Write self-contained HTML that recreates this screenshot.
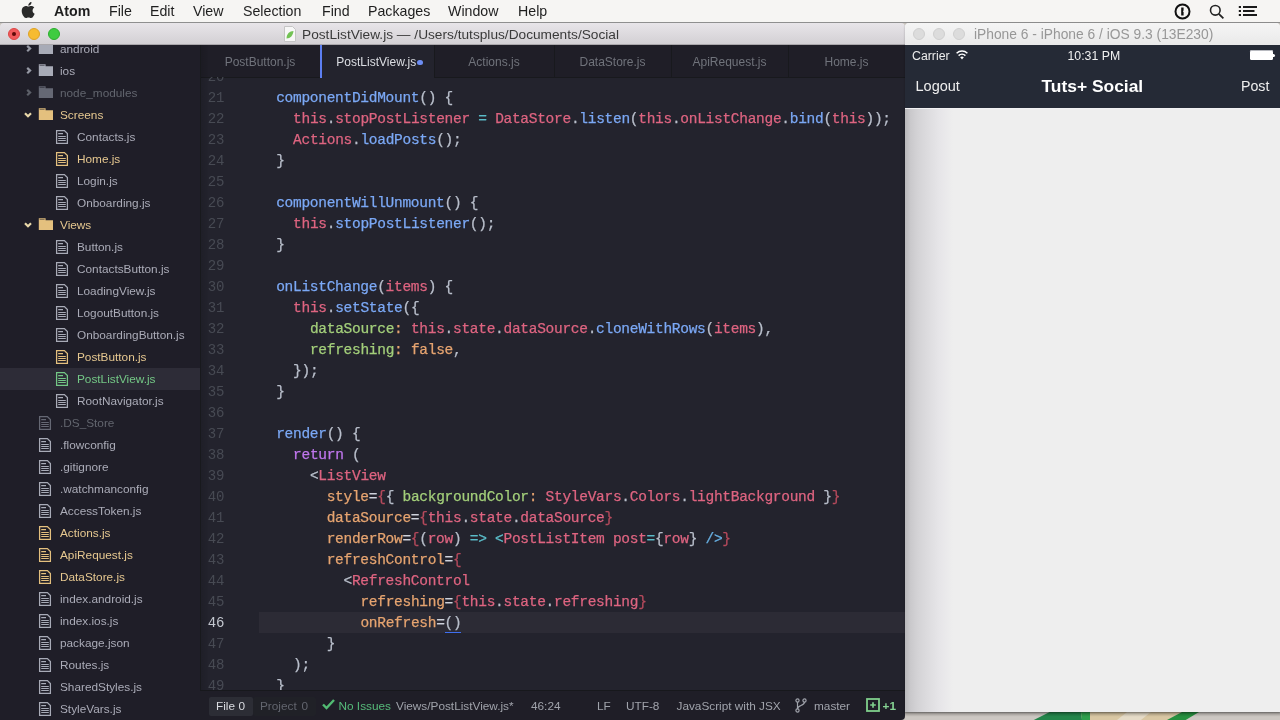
<!DOCTYPE html>
<html><head><meta charset="utf-8"><style>
*{margin:0;padding:0;box-sizing:border-box}
html,body{width:1280px;height:720px;overflow:hidden;background:#c8c3bc;font-family:"Liberation Sans",sans-serif}
.abs{position:absolute}
#menubar{left:0;top:0;width:1280px;height:22px;background:#f6f5f3;color:#1e1e1e;font-size:14.2px}
.mi{position:absolute;top:3px;line-height:17px;white-space:nowrap}
.tl{position:absolute;width:12px;height:12px;border-radius:50%}
.it{position:absolute;height:22px;line-height:22px;white-space:nowrap;font-size:11.8px}
.tab{position:absolute;top:45px;height:32px;line-height:35px;font-size:12px;color:#70737b;text-align:center;white-space:nowrap}
.tab.act{background:#23232d;color:#dcdee3;border-left:2px solid #5d7ff2;height:33px}
.dot{display:inline-block;width:5.5px;height:5.5px;border-radius:50%;background:#6d8df3;margin-left:1px;vertical-align:1px}
.ed{font-family:"Liberation Mono",monospace;font-size:14.5px;letter-spacing:-0.3px}
.ln{position:absolute;left:200px;width:24.5px;text-align:right;color:#474a53;height:21px;line-height:21px;font-family:"Liberation Mono",monospace;font-size:14px}
.ln.cur{color:#c3c7cf}
.cl{position:absolute;white-space:pre;height:21px;line-height:21px;font-family:"Liberation Mono",monospace;font-size:14.5px;letter-spacing:-0.285px;-webkit-text-stroke:0.25px currentColor}
.f{color:#7ba8f5} .r{color:#de6480} .c{color:#5bbcc8} .g{color:#b9bfcb} .gr{color:#a3cf7a} .o{color:#e6a470} .p{color:#c076ee} .lb{color:#67aee0} .dr{color:#b54a5c} .w{color:#cfd3dc}
.s{position:absolute;top:692px;height:29px;line-height:29px;white-space:nowrap;font-size:11.8px;color:#a0a3ab}
</style></head><body><div class="abs" style="left:0;top:0;width:1280px;height:720px;will-change:transform;overflow:hidden">
<!-- menubar -->
<div id="menubar" class="abs">
  <svg class="abs" style="left:21px;top:2px" width="14" height="16" viewBox="0 0 14 16"><path d="M11.6 8.5c0-2 1.6-2.9 1.7-3-0.9-1.4-2.4-1.6-2.9-1.6-1.2-0.1-2.4 0.7-3 0.7-0.6 0-1.6-0.7-2.6-0.7C3.4 4 2.1 4.8 1.4 6c-1.4 2.4-0.4 6 1 8 0.7 1 1.5 2 2.5 2 1 0 1.4-0.6 2.6-0.6s1.5 0.6 2.6 0.6c1.1 0 1.8-1 2.4-2 0.8-1.1 1.1-2.2 1.1-2.3-0.1 0-2.1-0.8-2.1-3.2zM9.7 2.6c0.5-0.7 0.9-1.6 0.8-2.6-0.8 0-1.8 0.5-2.3 1.2-0.5 0.6-1 1.5-0.8 2.5 0.9 0.1 1.8-0.5 2.3-1.1z" fill="#2a2a2a"/></svg>
  <span class="mi" style="left:54px;font-weight:bold">Atom</span>
  <span class="mi" style="left:109px">File</span>
  <span class="mi" style="left:150px">Edit</span>
  <span class="mi" style="left:193px">View</span>
  <span class="mi" style="left:243px">Selection</span>
  <span class="mi" style="left:322px">Find</span>
  <span class="mi" style="left:368px">Packages</span>
  <span class="mi" style="left:448px">Window</span>
  <span class="mi" style="left:518px">Help</span>
  <svg class="abs" style="left:1174px;top:3px" width="17" height="17" viewBox="0 0 17 17"><circle cx="8.5" cy="8.5" r="7" fill="none" stroke="#111" stroke-width="2"/><path d="M7.2 4.5h2.4v3l-0.8 0.8 0.8 0.8v3.4h-2.4z" fill="#111"/></svg>
  <svg class="abs" style="left:1209px;top:4px" width="16" height="16" viewBox="0 0 16 16"><circle cx="6.3" cy="6.3" r="4.8" fill="none" stroke="#222" stroke-width="1.6"/><path d="M9.8 9.8l4.6 4.6" stroke="#222" stroke-width="1.8"/></svg>
  <svg class="abs" style="left:1238px;top:5px" width="20" height="13" viewBox="0 0 20 13"><path d="M0.8 2h2.2M0.8 6h2.2M0.8 10h2.2M5 2h14M5 6h11.5M5 10h14" stroke="#1a1a1a" stroke-width="1.8"/></svg>
</div>
<div class="abs" style="left:0;top:22px;width:1280px;height:1px;background:#8f8f8f"></div>

<!-- atom window -->
<div class="abs" style="left:0;top:23px;width:905px;height:22px;background:linear-gradient(#e8e5e9,#d2cfd3);border-radius:4px 4px 0 0"></div>
<div class="abs" style="left:0;top:44px;width:905px;height:1px;background:#aaa7ab"></div>
<div class="tl" style="left:8px;top:28px;background:#f0595a;border:1px solid #dc4646"></div>
<div class="abs" style="left:12px;top:32px;width:4px;height:4px;border-radius:50%;background:#5e0a08"></div>
<div class="tl" style="left:28px;top:28px;background:#f6bb31;border:1px solid #dfa225"></div>
<div class="tl" style="left:48px;top:28px;background:#3fcb41;border:1px solid #2cae2d"></div>
<svg class="abs" style="left:284px;top:26px" width="12" height="16" viewBox="0 0 12 16"><path d="M0.5 0.5h8l3 3v12h-11z" fill="#f7f7f7" stroke="#c5c5c5"/><path d="M2.5 12.5c0-4.5 3-7.5 7-7.5-0.5 4.5-3 7.5-7 7.5z" fill="#72c254"/></svg>
<span class="abs" style="left:302px;top:26px;font-size:13.7px;color:#3a3a3a;line-height:17px;white-space:nowrap">PostListView.js — /Users/tutsplus/Documents/Social</span>

<div class="abs" style="left:0;top:45px;width:200px;height:675px;background:#1f1e28;overflow:hidden">
<div class="abs" style="left:0;top:-45px;width:200px;height:720px"><svg class="abs" style="left:26.4px;top:44.6px" width="9" height="9" viewBox="0 0 9 9"><path d="M1.2 0.9L4.1 3.6L1.2 6.3" fill="none" stroke="#9598a3" stroke-width="2.2"/></svg><svg class="abs" style="left:38px;top:41.8px" width="16" height="14" viewBox="0 0 16 14"><path d="M0.8 0.2H7.6V2.2H15V12.1H0.8Z" fill="#a8abb7"/><path d="M1.6 1.4H6.6" stroke="#1f1e28" stroke-width="0.9" opacity="0.6"/></svg><div class="it" style="left:60px;top:38px;color:#abacb8">android</div><svg class="abs" style="left:26.4px;top:66.6px" width="9" height="9" viewBox="0 0 9 9"><path d="M1.2 0.9L4.1 3.6L1.2 6.3" fill="none" stroke="#9598a3" stroke-width="2.2"/></svg><svg class="abs" style="left:38px;top:63.8px" width="16" height="14" viewBox="0 0 16 14"><path d="M0.8 0.2H7.6V2.2H15V12.1H0.8Z" fill="#a8abb7"/><path d="M1.6 1.4H6.6" stroke="#1f1e28" stroke-width="0.9" opacity="0.6"/></svg><div class="it" style="left:60px;top:60px;color:#abacb8">ios</div><svg class="abs" style="left:26.4px;top:88.6px" width="9" height="9" viewBox="0 0 9 9"><path d="M1.2 0.9L4.1 3.6L1.2 6.3" fill="none" stroke="#5c5f68" stroke-width="2.2"/></svg><svg class="abs" style="left:38px;top:85.8px" width="16" height="14" viewBox="0 0 16 14"><path d="M0.8 0.2H7.6V2.2H15V12.1H0.8Z" fill="#656874"/><path d="M1.6 1.4H6.6" stroke="#1f1e28" stroke-width="0.9" opacity="0.6"/></svg><div class="it" style="left:60px;top:82px;color:#62656e">node_modules</div><svg class="abs" style="left:24.2px;top:111.8px" width="9" height="9" viewBox="0 0 9 9"><path d="M1 1.2L4 4.2L7 1.2" fill="none" stroke="#ead9aa" stroke-width="2.2"/></svg><svg class="abs" style="left:38px;top:107.8px" width="16" height="14" viewBox="0 0 16 14"><path d="M0.8 0.2H7.6V2.2H15V12.1H0.8Z" fill="#e4c07e"/><path d="M1.6 1.4H6.6" stroke="#1f1e28" stroke-width="0.9" opacity="0.6"/></svg><div class="it" style="left:60px;top:104px;color:#e6c890">Screens</div><svg class="abs" style="left:55px;top:129px" width="14" height="16" viewBox="0 0 14 16"><path d="M1.6 1.6H9.4L12.4 4.6V14.4H1.6Z" fill="none" stroke="#a8abb7" stroke-width="1.25"/><path d="M3.2 4.6H8M3.2 7.5H10.8M3.2 9.5H10.8M3.2 11.5H10.8" stroke="#a8abb7" stroke-width="1.05"/></svg><div class="it" style="left:77px;top:126px;color:#abacb8">Contacts.js</div><svg class="abs" style="left:55px;top:151px" width="14" height="16" viewBox="0 0 14 16"><path d="M1.6 1.6H9.4L12.4 4.6V14.4H1.6Z" fill="none" stroke="#e4c07e" stroke-width="1.25"/><path d="M3.2 4.6H8M3.2 7.5H10.8M3.2 9.5H10.8M3.2 11.5H10.8" stroke="#e4c07e" stroke-width="1.05"/></svg><div class="it" style="left:77px;top:148px;color:#e6c890">Home.js</div><svg class="abs" style="left:55px;top:173px" width="14" height="16" viewBox="0 0 14 16"><path d="M1.6 1.6H9.4L12.4 4.6V14.4H1.6Z" fill="none" stroke="#a8abb7" stroke-width="1.25"/><path d="M3.2 4.6H8M3.2 7.5H10.8M3.2 9.5H10.8M3.2 11.5H10.8" stroke="#a8abb7" stroke-width="1.05"/></svg><div class="it" style="left:77px;top:170px;color:#abacb8">Login.js</div><svg class="abs" style="left:55px;top:195px" width="14" height="16" viewBox="0 0 14 16"><path d="M1.6 1.6H9.4L12.4 4.6V14.4H1.6Z" fill="none" stroke="#a8abb7" stroke-width="1.25"/><path d="M3.2 4.6H8M3.2 7.5H10.8M3.2 9.5H10.8M3.2 11.5H10.8" stroke="#a8abb7" stroke-width="1.05"/></svg><div class="it" style="left:77px;top:192px;color:#abacb8">Onboarding.js</div><svg class="abs" style="left:24.2px;top:221.8px" width="9" height="9" viewBox="0 0 9 9"><path d="M1 1.2L4 4.2L7 1.2" fill="none" stroke="#ead9aa" stroke-width="2.2"/></svg><svg class="abs" style="left:38px;top:217.8px" width="16" height="14" viewBox="0 0 16 14"><path d="M0.8 0.2H7.6V2.2H15V12.1H0.8Z" fill="#e4c07e"/><path d="M1.6 1.4H6.6" stroke="#1f1e28" stroke-width="0.9" opacity="0.6"/></svg><div class="it" style="left:60px;top:214px;color:#e6c890">Views</div><svg class="abs" style="left:55px;top:239px" width="14" height="16" viewBox="0 0 14 16"><path d="M1.6 1.6H9.4L12.4 4.6V14.4H1.6Z" fill="none" stroke="#a8abb7" stroke-width="1.25"/><path d="M3.2 4.6H8M3.2 7.5H10.8M3.2 9.5H10.8M3.2 11.5H10.8" stroke="#a8abb7" stroke-width="1.05"/></svg><div class="it" style="left:77px;top:236px;color:#abacb8">Button.js</div><svg class="abs" style="left:55px;top:261px" width="14" height="16" viewBox="0 0 14 16"><path d="M1.6 1.6H9.4L12.4 4.6V14.4H1.6Z" fill="none" stroke="#a8abb7" stroke-width="1.25"/><path d="M3.2 4.6H8M3.2 7.5H10.8M3.2 9.5H10.8M3.2 11.5H10.8" stroke="#a8abb7" stroke-width="1.05"/></svg><div class="it" style="left:77px;top:258px;color:#abacb8">ContactsButton.js</div><svg class="abs" style="left:55px;top:283px" width="14" height="16" viewBox="0 0 14 16"><path d="M1.6 1.6H9.4L12.4 4.6V14.4H1.6Z" fill="none" stroke="#a8abb7" stroke-width="1.25"/><path d="M3.2 4.6H8M3.2 7.5H10.8M3.2 9.5H10.8M3.2 11.5H10.8" stroke="#a8abb7" stroke-width="1.05"/></svg><div class="it" style="left:77px;top:280px;color:#abacb8">LoadingView.js</div><svg class="abs" style="left:55px;top:305px" width="14" height="16" viewBox="0 0 14 16"><path d="M1.6 1.6H9.4L12.4 4.6V14.4H1.6Z" fill="none" stroke="#a8abb7" stroke-width="1.25"/><path d="M3.2 4.6H8M3.2 7.5H10.8M3.2 9.5H10.8M3.2 11.5H10.8" stroke="#a8abb7" stroke-width="1.05"/></svg><div class="it" style="left:77px;top:302px;color:#abacb8">LogoutButton.js</div><svg class="abs" style="left:55px;top:327px" width="14" height="16" viewBox="0 0 14 16"><path d="M1.6 1.6H9.4L12.4 4.6V14.4H1.6Z" fill="none" stroke="#a8abb7" stroke-width="1.25"/><path d="M3.2 4.6H8M3.2 7.5H10.8M3.2 9.5H10.8M3.2 11.5H10.8" stroke="#a8abb7" stroke-width="1.05"/></svg><div class="it" style="left:77px;top:324px;color:#abacb8">OnboardingButton.js</div><svg class="abs" style="left:55px;top:349px" width="14" height="16" viewBox="0 0 14 16"><path d="M1.6 1.6H9.4L12.4 4.6V14.4H1.6Z" fill="none" stroke="#e4c07e" stroke-width="1.25"/><path d="M3.2 4.6H8M3.2 7.5H10.8M3.2 9.5H10.8M3.2 11.5H10.8" stroke="#e4c07e" stroke-width="1.05"/></svg><div class="it" style="left:77px;top:346px;color:#e6c890">PostButton.js</div><div class="abs" style="left:0;top:368px;width:200px;height:22px;background:#2d2c37"></div><svg class="abs" style="left:55px;top:371px" width="14" height="16" viewBox="0 0 14 16"><path d="M1.6 1.6H9.4L12.4 4.6V14.4H1.6Z" fill="none" stroke="#74c886" stroke-width="1.25"/><path d="M3.2 4.6H8M3.2 7.5H10.8M3.2 9.5H10.8M3.2 11.5H10.8" stroke="#74c886" stroke-width="1.05"/></svg><div class="it" style="left:77px;top:368px;color:#74c886">PostListView.js</div><svg class="abs" style="left:55px;top:393px" width="14" height="16" viewBox="0 0 14 16"><path d="M1.6 1.6H9.4L12.4 4.6V14.4H1.6Z" fill="none" stroke="#a8abb7" stroke-width="1.25"/><path d="M3.2 4.6H8M3.2 7.5H10.8M3.2 9.5H10.8M3.2 11.5H10.8" stroke="#a8abb7" stroke-width="1.05"/></svg><div class="it" style="left:77px;top:390px;color:#abacb8">RootNavigator.js</div><svg class="abs" style="left:38px;top:415px" width="14" height="16" viewBox="0 0 14 16"><path d="M1.6 1.6H9.4L12.4 4.6V14.4H1.6Z" fill="none" stroke="#656874" stroke-width="1.25"/><path d="M3.2 4.6H8M3.2 7.5H10.8M3.2 9.5H10.8M3.2 11.5H10.8" stroke="#656874" stroke-width="1.05"/></svg><div class="it" style="left:60px;top:412px;color:#62656e">.DS_Store</div><svg class="abs" style="left:38px;top:437px" width="14" height="16" viewBox="0 0 14 16"><path d="M1.6 1.6H9.4L12.4 4.6V14.4H1.6Z" fill="none" stroke="#a8abb7" stroke-width="1.25"/><path d="M3.2 4.6H8M3.2 7.5H10.8M3.2 9.5H10.8M3.2 11.5H10.8" stroke="#a8abb7" stroke-width="1.05"/></svg><div class="it" style="left:60px;top:434px;color:#abacb8">.flowconfig</div><svg class="abs" style="left:38px;top:459px" width="14" height="16" viewBox="0 0 14 16"><path d="M1.6 1.6H9.4L12.4 4.6V14.4H1.6Z" fill="none" stroke="#a8abb7" stroke-width="1.25"/><path d="M3.2 4.6H8M3.2 7.5H10.8M3.2 9.5H10.8M3.2 11.5H10.8" stroke="#a8abb7" stroke-width="1.05"/></svg><div class="it" style="left:60px;top:456px;color:#abacb8">.gitignore</div><svg class="abs" style="left:38px;top:481px" width="14" height="16" viewBox="0 0 14 16"><path d="M1.6 1.6H9.4L12.4 4.6V14.4H1.6Z" fill="none" stroke="#a8abb7" stroke-width="1.25"/><path d="M3.2 4.6H8M3.2 7.5H10.8M3.2 9.5H10.8M3.2 11.5H10.8" stroke="#a8abb7" stroke-width="1.05"/></svg><div class="it" style="left:60px;top:478px;color:#abacb8">.watchmanconfig</div><svg class="abs" style="left:38px;top:503px" width="14" height="16" viewBox="0 0 14 16"><path d="M1.6 1.6H9.4L12.4 4.6V14.4H1.6Z" fill="none" stroke="#a8abb7" stroke-width="1.25"/><path d="M3.2 4.6H8M3.2 7.5H10.8M3.2 9.5H10.8M3.2 11.5H10.8" stroke="#a8abb7" stroke-width="1.05"/></svg><div class="it" style="left:60px;top:500px;color:#abacb8">AccessToken.js</div><svg class="abs" style="left:38px;top:525px" width="14" height="16" viewBox="0 0 14 16"><path d="M1.6 1.6H9.4L12.4 4.6V14.4H1.6Z" fill="none" stroke="#e4c07e" stroke-width="1.25"/><path d="M3.2 4.6H8M3.2 7.5H10.8M3.2 9.5H10.8M3.2 11.5H10.8" stroke="#e4c07e" stroke-width="1.05"/></svg><div class="it" style="left:60px;top:522px;color:#e6c890">Actions.js</div><svg class="abs" style="left:38px;top:547px" width="14" height="16" viewBox="0 0 14 16"><path d="M1.6 1.6H9.4L12.4 4.6V14.4H1.6Z" fill="none" stroke="#e4c07e" stroke-width="1.25"/><path d="M3.2 4.6H8M3.2 7.5H10.8M3.2 9.5H10.8M3.2 11.5H10.8" stroke="#e4c07e" stroke-width="1.05"/></svg><div class="it" style="left:60px;top:544px;color:#e6c890">ApiRequest.js</div><svg class="abs" style="left:38px;top:569px" width="14" height="16" viewBox="0 0 14 16"><path d="M1.6 1.6H9.4L12.4 4.6V14.4H1.6Z" fill="none" stroke="#e4c07e" stroke-width="1.25"/><path d="M3.2 4.6H8M3.2 7.5H10.8M3.2 9.5H10.8M3.2 11.5H10.8" stroke="#e4c07e" stroke-width="1.05"/></svg><div class="it" style="left:60px;top:566px;color:#e6c890">DataStore.js</div><svg class="abs" style="left:38px;top:591px" width="14" height="16" viewBox="0 0 14 16"><path d="M1.6 1.6H9.4L12.4 4.6V14.4H1.6Z" fill="none" stroke="#a8abb7" stroke-width="1.25"/><path d="M3.2 4.6H8M3.2 7.5H10.8M3.2 9.5H10.8M3.2 11.5H10.8" stroke="#a8abb7" stroke-width="1.05"/></svg><div class="it" style="left:60px;top:588px;color:#abacb8">index.android.js</div><svg class="abs" style="left:38px;top:613px" width="14" height="16" viewBox="0 0 14 16"><path d="M1.6 1.6H9.4L12.4 4.6V14.4H1.6Z" fill="none" stroke="#a8abb7" stroke-width="1.25"/><path d="M3.2 4.6H8M3.2 7.5H10.8M3.2 9.5H10.8M3.2 11.5H10.8" stroke="#a8abb7" stroke-width="1.05"/></svg><div class="it" style="left:60px;top:610px;color:#abacb8">index.ios.js</div><svg class="abs" style="left:38px;top:635px" width="14" height="16" viewBox="0 0 14 16"><path d="M1.6 1.6H9.4L12.4 4.6V14.4H1.6Z" fill="none" stroke="#a8abb7" stroke-width="1.25"/><path d="M3.2 4.6H8M3.2 7.5H10.8M3.2 9.5H10.8M3.2 11.5H10.8" stroke="#a8abb7" stroke-width="1.05"/></svg><div class="it" style="left:60px;top:632px;color:#abacb8">package.json</div><svg class="abs" style="left:38px;top:657px" width="14" height="16" viewBox="0 0 14 16"><path d="M1.6 1.6H9.4L12.4 4.6V14.4H1.6Z" fill="none" stroke="#a8abb7" stroke-width="1.25"/><path d="M3.2 4.6H8M3.2 7.5H10.8M3.2 9.5H10.8M3.2 11.5H10.8" stroke="#a8abb7" stroke-width="1.05"/></svg><div class="it" style="left:60px;top:654px;color:#abacb8">Routes.js</div><svg class="abs" style="left:38px;top:679px" width="14" height="16" viewBox="0 0 14 16"><path d="M1.6 1.6H9.4L12.4 4.6V14.4H1.6Z" fill="none" stroke="#a8abb7" stroke-width="1.25"/><path d="M3.2 4.6H8M3.2 7.5H10.8M3.2 9.5H10.8M3.2 11.5H10.8" stroke="#a8abb7" stroke-width="1.05"/></svg><div class="it" style="left:60px;top:676px;color:#abacb8">SharedStyles.js</div><svg class="abs" style="left:38px;top:701px" width="14" height="16" viewBox="0 0 14 16"><path d="M1.6 1.6H9.4L12.4 4.6V14.4H1.6Z" fill="none" stroke="#a8abb7" stroke-width="1.25"/><path d="M3.2 4.6H8M3.2 7.5H10.8M3.2 9.5H10.8M3.2 11.5H10.8" stroke="#a8abb7" stroke-width="1.05"/></svg><div class="it" style="left:60px;top:698px;color:#abacb8">StyleVars.js</div></div>
</div>
<div class="abs" style="left:200px;top:45px;width:705px;height:645px;background:#23232d"></div>
<div class="abs" style="left:200px;top:45px;width:705px;height:32px;background:#1f1e27"></div>
<div class="abs" style="left:200px;top:77px;width:705px;height:1px;background:#18191d"></div>
<div class="abs" style="left:200px;top:45px;width:1px;height:645px;background:#18191d"></div>
<div class="abs" style="left:201px;top:45px;width:7px;height:645px;background:linear-gradient(90deg,rgba(0,0,0,0.12),rgba(0,0,0,0.03))"></div>
<div class="tab" style="left:200px;width:120px">PostButton.js</div><div class="tab act" style="left:320px;width:114px"><span style="margin-left:3px">PostListView.js</span><span class="dot"></span></div><div class="tab" style="left:434px;width:120px">Actions.js</div><div class="abs" style="left:434px;top:45px;width:1px;height:32px;background:#18191d"></div><div class="tab" style="left:554px;width:117px">DataStore.js</div><div class="abs" style="left:554px;top:45px;width:1px;height:32px;background:#18191d"></div><div class="tab" style="left:671px;width:117px">ApiRequest.js</div><div class="abs" style="left:671px;top:45px;width:1px;height:32px;background:#18191d"></div><div class="tab" style="left:788px;width:117px">Home.js</div><div class="abs" style="left:788px;top:45px;width:1px;height:32px;background:#18191d"></div>
<div class="abs" style="left:259px;top:612px;width:646px;height:21px;background:#2c2b35"></div>
<div class="abs" style="left:200px;top:77px;width:705px;height:613px;overflow:hidden">
<div class="abs" style="left:-200px;top:-77px;width:905px;height:720px"><div class="ln" style="top:67px">20</div><div class="cl" style="top:67px;left:276.2px"><span class="g"></span></div><div class="ln" style="top:88px">21</div><div class="cl" style="top:88px;left:276.2px"><span class="f">componentDidMount</span><span class="g">() {</span></div><div class="ln" style="top:109px">22</div><div class="cl" style="top:109px;left:293.1px"><span class="r">this</span><span class="g">.</span><span class="r">stopPostListener</span><span class="g"> </span><span class="c">=</span><span class="g"> </span><span class="r">DataStore</span><span class="g">.</span><span class="f">listen</span><span class="g">(</span><span class="r">this</span><span class="g">.</span><span class="r">onListChange</span><span class="g">.</span><span class="f">bind</span><span class="g">(</span><span class="r">this</span><span class="g">));</span></div><div class="ln" style="top:130px">23</div><div class="cl" style="top:130px;left:293.1px"><span class="r">Actions</span><span class="g">.</span><span class="f">loadPosts</span><span class="g">();</span></div><div class="ln" style="top:151px">24</div><div class="cl" style="top:151px;left:276.2px"><span class="g">}</span></div><div class="ln" style="top:172px">25</div><div class="ln" style="top:193px">26</div><div class="cl" style="top:193px;left:276.2px"><span class="f">componentWillUnmount</span><span class="g">() {</span></div><div class="ln" style="top:214px">27</div><div class="cl" style="top:214px;left:293.1px"><span class="r">this</span><span class="g">.</span><span class="f">stopPostListener</span><span class="g">();</span></div><div class="ln" style="top:235px">28</div><div class="cl" style="top:235px;left:276.2px"><span class="g">}</span></div><div class="ln" style="top:256px">29</div><div class="ln" style="top:277px">30</div><div class="cl" style="top:277px;left:276.2px"><span class="f">onListChange</span><span class="g">(</span><span class="r">items</span><span class="g">) {</span></div><div class="ln" style="top:298px">31</div><div class="cl" style="top:298px;left:293.1px"><span class="r">this</span><span class="g">.</span><span class="f">setState</span><span class="g">({</span></div><div class="ln" style="top:319px">32</div><div class="cl" style="top:319px;left:309.9px"><span class="gr">dataSource</span><span class="o">:</span><span class="g"> </span><span class="r">this</span><span class="g">.</span><span class="r">state</span><span class="g">.</span><span class="r">dataSource</span><span class="g">.</span><span class="f">cloneWithRows</span><span class="g">(</span><span class="r">items</span><span class="g">),</span></div><div class="ln" style="top:340px">33</div><div class="cl" style="top:340px;left:309.9px"><span class="gr">refreshing</span><span class="o">:</span><span class="g"> </span><span class="o">false</span><span class="g">,</span></div><div class="ln" style="top:361px">34</div><div class="cl" style="top:361px;left:293.1px"><span class="g">});</span></div><div class="ln" style="top:382px">35</div><div class="cl" style="top:382px;left:276.2px"><span class="g">}</span></div><div class="ln" style="top:403px">36</div><div class="ln" style="top:424px">37</div><div class="cl" style="top:424px;left:276.2px"><span class="f">render</span><span class="g">() {</span></div><div class="ln" style="top:445px">38</div><div class="cl" style="top:445px;left:293.1px"><span class="p">return</span><span class="g"> (</span></div><div class="ln" style="top:466px">39</div><div class="cl" style="top:466px;left:309.9px"><span class="g">&lt;</span><span class="r">ListView</span></div><div class="ln" style="top:487px">40</div><div class="cl" style="top:487px;left:326.7px"><span class="o">style</span><span class="w">=</span><span class="dr">{</span><span class="g">{ </span><span class="gr">backgroundColor</span><span class="o">:</span><span class="g"> </span><span class="r">StyleVars</span><span class="g">.</span><span class="r">Colors</span><span class="g">.</span><span class="r">lightBackground</span><span class="g"> }</span><span class="dr">}</span></div><div class="ln" style="top:508px">41</div><div class="cl" style="top:508px;left:326.7px"><span class="o">dataSource</span><span class="w">=</span><span class="dr">{</span><span class="r">this</span><span class="g">.</span><span class="r">state</span><span class="g">.</span><span class="r">dataSource</span><span class="dr">}</span></div><div class="ln" style="top:529px">42</div><div class="cl" style="top:529px;left:326.7px"><span class="o">renderRow</span><span class="w">=</span><span class="dr">{</span><span class="g">(</span><span class="r">row</span><span class="g">) </span><span class="c">=&gt;</span><span class="g"> </span><span class="c">&lt;</span><span class="r">PostListItem</span><span class="g"> </span><span class="r">post</span><span class="c">=</span><span class="g">{</span><span class="r">row</span><span class="g">} </span><span class="lb">/&gt;</span><span class="dr">}</span></div><div class="ln" style="top:550px">43</div><div class="cl" style="top:550px;left:326.7px"><span class="o">refreshControl</span><span class="w">=</span><span class="dr">{</span></div><div class="ln" style="top:571px">44</div><div class="cl" style="top:571px;left:343.5px"><span class="g">&lt;</span><span class="r">RefreshControl</span></div><div class="ln" style="top:592px">45</div><div class="cl" style="top:592px;left:360.4px"><span class="o">refreshing</span><span class="w">=</span><span class="dr">{</span><span class="r">this</span><span class="g">.</span><span class="r">state</span><span class="g">.</span><span class="r">refreshing</span><span class="dr">}</span></div><div class="ln cur" style="top:613px">46</div><div class="cl" style="top:613px;left:360.4px"><span class="o">onRefresh</span><span class="w">=</span><span class="g">()</span></div><div class="ln" style="top:634px">47</div><div class="cl" style="top:634px;left:326.7px"><span class="g">}</span></div><div class="ln" style="top:655px">48</div><div class="cl" style="top:655px;left:293.1px"><span class="g">);</span></div><div class="ln" style="top:676px">49</div><div class="cl" style="top:676px;left:276.2px"><span class="g">}</span></div>
<div class="abs" style="left:444.5px;top:632px;width:16px;height:1px;background:#3f6ff0"></div>
</div></div>

<!-- status bar -->
<div class="abs" style="left:200px;top:690px;width:705px;height:30px;background:#1f1e27;border-radius:0 0 4px 0"></div>
<div class="abs" style="left:200px;top:690px;width:705px;height:1px;background:#17181c"></div>
<div class="abs" style="left:209px;top:697px;width:44px;height:19px;background:#2c2d35;border-radius:2px"></div>
<div class="abs" style="left:253px;top:697px;width:63px;height:19px;background:#202127;border-radius:2px"></div>
<span class="s" style="left:216px;color:#dadce1">File</span><span class="s" style="left:238.5px;color:#dadce1">0</span>
<span class="s" style="left:260px;color:#62656e">Project</span><span class="s" style="left:301.5px;color:#62656e">0</span>
<svg class="abs" style="left:322px;top:699px" width="13" height="11" viewBox="0 0 13 11"><path d="M1 5.5l3.5 3.5 7.5-8" fill="none" stroke="#52bb73" stroke-width="2.4"/></svg>
<span class="s" style="left:338.5px;color:#56bb7a">No Issues</span>
<span class="s" style="left:396px">Views/PostListView.js*</span>
<span class="s" style="left:531px">46:24</span>
<span class="s" style="left:597px">LF</span>
<span class="s" style="left:626px">UTF-8</span>
<span class="s" style="left:676.5px">JavaScript with JSX</span>
<svg class="abs" style="left:795px;top:698px" width="12" height="15" viewBox="0 0 12 15"><circle cx="2.5" cy="2.5" r="1.6" fill="none" stroke="#a0a3ab" stroke-width="1.2"/><circle cx="2.5" cy="12.5" r="1.6" fill="none" stroke="#a0a3ab" stroke-width="1.2"/><circle cx="9.5" cy="2.5" r="1.6" fill="none" stroke="#a0a3ab" stroke-width="1.2"/><path d="M2.5 4v7M9.5 4c0 4-7 3-7 7" fill="none" stroke="#a0a3ab" stroke-width="1.2"/></svg>
<span class="s" style="left:814px">master</span>
<svg class="abs" style="left:866px;top:698px" width="14" height="14" viewBox="0 0 14 14"><rect x="1" y="1" width="12" height="12" fill="none" stroke="#7fcf8c" stroke-width="1.8"/><path d="M7 4.2v5.6M4.2 7h5.6" stroke="#7fcf8c" stroke-width="1.7"/></svg>
<span class="s" style="left:882.5px;color:#86d393;font-weight:bold">+1</span>

<!-- wallpaper strip -->
<svg class="abs" style="left:905px;top:712px" width="375" height="8" viewBox="0 0 375 8">
<defs><linearGradient id="sh" x1="0" y1="0" x2="0" y2="1"><stop offset="0" stop-color="#000" stop-opacity="0.28"/><stop offset="0.6" stop-color="#000" stop-opacity="0"/></linearGradient></defs>
<rect width="375" height="8" fill="#ccc7c2"/>
<polygon points="177,0 277,0 262,8 165,8" fill="#d9c7a3"/>
<polygon points="222,0 246,0 236,8 212,8" fill="#e5dbc7"/>
<polygon points="144.7,0 176,0 177,8 128.8,8" fill="#23854a"/>
<polygon points="176,0 185,0 185,8 177,8" fill="#2e9f4c"/>
<polygon points="277,0 294,0 280.7,8 262,8" fill="#26913f"/>
<rect width="375" height="8" fill="url(#sh)"/>
</svg>

<!-- simulator -->
<div class="abs" style="left:905px;top:23px;width:375px;height:689px;background:#eeeeee;border-radius:4px 4px 0 0;overflow:hidden;box-shadow:0 1px 2px rgba(0,0,0,0.3)">
  <div class="abs" style="left:0;top:0;width:375px;height:22px;background:linear-gradient(#f5f5f5,#e9e9e9)"></div>
  <div class="tl" style="left:8px;top:5px;background:#dcdcdc;border:1px solid #cfcfcf"></div>
  <div class="tl" style="left:28px;top:5px;background:#dcdcdc;border:1px solid #cfcfcf"></div>
  <div class="tl" style="left:48px;top:5px;background:#dcdcdc;border:1px solid #cfcfcf"></div>
  <span class="abs" style="left:69px;top:3px;font-size:13.8px;color:#979797;line-height:17px;white-space:nowrap">iPhone 6 - iPhone 6 / iOS 9.3 (13E230)</span>
  <div class="abs" style="left:0;top:22px;width:375px;height:63px;background:#252a36;color:#fff">
    <span class="abs" style="left:7px;top:3px;font-size:12.3px;line-height:16px;white-space:nowrap;color:#ececec">Carrier</span>
    <svg class="abs" style="left:49.5px;top:4px" width="14" height="11" viewBox="0 0 14 11"><path d="M7 10.5l1.8-2.3a2.8 2.8 0 0 0-3.6 0z" fill="#fff"/><path d="M3.6 6.6a5 5 0 0 1 6.8 0M1.6 4.2a8 8 0 0 1 10.8 0" fill="none" stroke="#fff" stroke-width="1.5"/></svg>
    <span class="abs" style="left:162.5px;top:3px;font-size:12.3px;line-height:16px;white-space:nowrap;color:#f2f2f2">10:31 PM</span>
    <div class="abs" style="left:345px;top:5px;width:22.5px;height:10px;background:#fff;border-radius:1.5px;box-shadow:inset 0 1px 0 #b8bac0"></div>
    <div class="abs" style="left:367.5px;top:8.5px;width:2px;height:3.5px;background:#fff;border-radius:0 1.5px 1.5px 0"></div>
    <span class="abs" style="left:10.5px;top:32px;font-size:14.5px;line-height:18px;color:#eeeeee;white-space:nowrap">Logout</span>
    <span class="abs" style="left:136.5px;top:31px;font-size:17.4px;line-height:20px;font-weight:bold;white-space:nowrap">Tuts+ Social</span>
    <span class="abs" style="left:336px;top:32px;font-size:14.2px;line-height:18px;color:#eeeeee;white-space:nowrap">Post</span>
  </div>
  <div class="abs" style="left:0;top:85px;width:50px;height:604px;background:linear-gradient(90deg,#b9b8bb 0px,#c9c8cb 5px,#d3d2d5 12px,#dcdbde 22px,#e6e5e8 34px,#eeeeee 48px)"></div>
  <div class="abs" style="left:0;top:85px;width:375px;height:1px;background:#f1f1f3"></div>
</div>
</div></body></html>
